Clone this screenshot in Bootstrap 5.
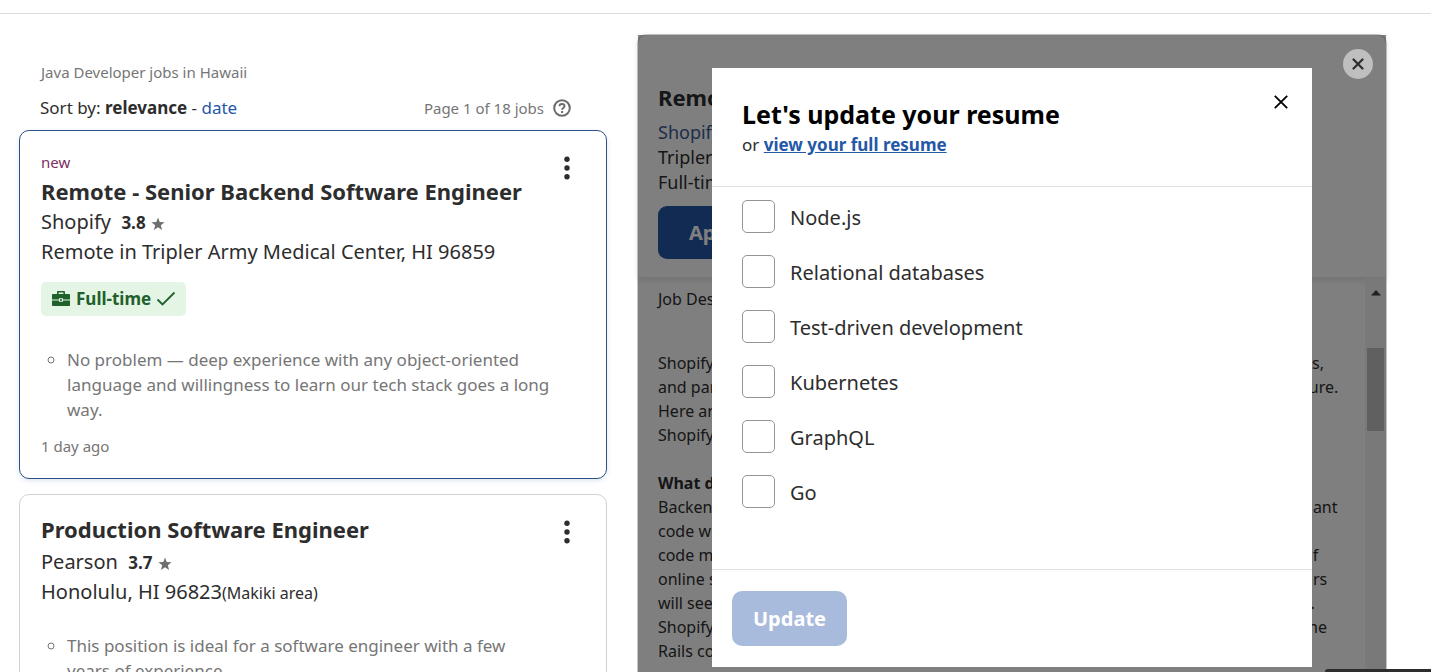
<!DOCTYPE html>
<html lang="en">
<head>
<meta charset="utf-8">
<meta name="viewport" content="width=device-width, initial-scale=1">
<title>Java Developer jobs in Hawaii</title>
<link href="https://cdn.jsdelivr.net/npm/bootstrap@5.3.0/dist/css/bootstrap.min.css" rel="stylesheet">
<style>
  body { font-family: "Noto Sans", sans-serif; color: #2d2d2d; background: #fff; height: 100vh; overflow: hidden; }
  a { color: #2557a7; }
  .topline { height: 14px; border-bottom: 1px solid #dedede; }
  .page { padding: 20px 44px 0 19px; gap: 30px; }
  .results { flex: 588 1 0; min-width: 0; padding-top: 26px; }
  .viewer { flex: 750 1 0; min-width: 0; }
  .muted { color: #767676; }
  .crumb { font-size: 15px; line-height: 24px; padding-left: 22px; }
  .sortbar { font-size: 17px; line-height: 26px; padding: 11px 35px 0 21px; margin-bottom: 9px; }
  .count { font-size: 15px; gap: 8px; }

  /* result cards */
  .job { border: 1px solid #d4d2d0; border-radius: 10px; padding: 20px 20px 20px 21px; margin-bottom: 15px; }
  .job.active { border-color: #2d5088; padding-bottom: 22px; box-shadow: 0 2px 5px rgba(37,87,167,.14); }
  .fresh { font-size: 15px; line-height: 22px; margin-bottom: 4px; color: #7b2f62; }
  .job h2 { font-size: 22px; line-height: 29px; font-weight: 700; margin: 0; }
  .job.active h2 { margin-bottom: 1px; }
  .place { font-size: 20px; line-height: 30px; }
  .place strong { font-size: 17px; line-height: 1; }
  .place .area { font-size: 16px; line-height: 1; }
  .kebab { width: 38px; height: 32px; border: 0; background: none; padding: 0; flex: none; }
  .tag { background: #e4f5e6; color: #1f602b; font-size: 17px; line-height: 34px; font-weight: 700; border-radius: 5px; padding: 0 10px; gap: 5px; margin-top: 15px; }
  .points { list-style: circle; padding: 0 40px 0 26px; margin: 26px 0 14px; font-size: 17px; line-height: 25px; color: #767676; }
  .job.active .points { padding-right: 0; margin-top: 31px; }
  .age { font-size: 15px; line-height: 20px; }

  /* job panel */
  .panel { border: 1px solid #c4c4c4; border-radius: 10px; height: 660px; }
  .head { padding: 47px 20px 18px; height: 243px; border-bottom: 1px solid #ececec; box-shadow: 0 2px 6px rgba(0,0,0,.12); }
  .head h2 { font-size: 22px; line-height: 30px; font-weight: 700; margin: 0 0 8px; }
  .facts { font-size: 18px; line-height: 25px; }
  .facts a { color: #3b5b94; }
  .apply { margin-top: 11px; height: 53px; padding: 0 31px; background: #2557a7; color: #fff; font-weight: 700; font-size: 20px; border: 0; border-radius: 9px; }
  .desc { padding: 9px 10px 0 20px; font-size: 16px; line-height: 24px; }
  .desc .tail { width: 52px; flex: none; }
  .gap-line { height: 40px; }
  .rail { width: 21px; background: #f2f2f2; padding-top: 12px; }
  .thumb { width: 17px; height: 83px; background: #c1c1c1; margin-top: 52px; }
  .shade { inset: 0; background: rgba(0,0,0,.5); }
  .round { top: 14px; right: 13px; width: 30px; height: 30px; border: 0; border-radius: 50%; background: #bfbfbf; padding: 0; }

  /* resume dialog */
  .sheet { width: 600px; max-width: 100%; background: #fff; margin: 33px auto 0; }
  .sheet-head { padding: 29px 20px 28px 30px; border-bottom: 1px solid #e4e2e0; }
  .sheet-head h1 { font-size: 25px; line-height: 34px; font-weight: 700; color: #000; margin: 0 0 1px; }
  .sheet-head p { font-size: 17px; line-height: 26px; margin: 0; }
  .closer { width: 22px; height: 24px; border: 0; background: none; padding: 0; margin-top: -7px; }
  .skills { padding: 13px 30px 39px; }
  .skill { gap: 15px; margin-bottom: 22px; height: 33px; padding: 0; font-size: 20px; line-height: 35px; }
  .skill .form-check-input { width: 33px; height: 33px; margin: 0; float: none; border: 1px solid #949494; border-radius: 5px; }
  .sheet-foot { padding: 21px 20px; border-top: 1px solid #e4e2e0; }
  .update { height: 55px; padding: 0 21px; border: 0; border-radius: 10px; background: #a8bbdc; color: #fff; font-size: 20px; font-weight: 700; }
  .dock { right: 0; bottom: 0; width: 106px; height: 3px; background: #2d2d2d; border-top-left-radius: 8px; }
</style>
</head>
<body>
<div class="topline"></div>
<main class="page d-flex align-items-start">
  <section class="results">
    <div class="crumb muted">Java Developer jobs in Hawaii</div>
    <div class="sortbar d-flex justify-content-between">
      <div>Sort by: <strong>relevance</strong> - <a href="#" class="text-decoration-none">date</a></div>
      <div class="count muted d-flex align-items-center">Page 1 of 18 jobs
        <svg width="20" height="20" viewBox="0 0 20 20" fill="none" stroke="#6b6b6b" stroke-width="2"><circle cx="10" cy="10" r="7.800"/><path d="M7.500 8.300C7.500 6.800 8.500 5.900 10 5.900s2.500 1 2.500 2.200c0 1.700-2.400 2-2.400 3.600"/><path d="M10.100 13v2" /></svg>
      </div>
    </div>

    <article class="job active">
      <div class="d-flex justify-content-between align-items-start">
        <div>
          <div class="fresh">new</div>
          <h2>Remote - Senior Backend Software Engineer</h2>
        </div>
        <button class="kebab" aria-label="Job actions"><svg width="8" height="24" viewBox="0 0 8 24" fill="#2d2d2d"><circle cx="4" cy="3.300" r="2.700"/><circle cx="4" cy="12" r="2.700"/><circle cx="4" cy="20.700" r="2.700"/></svg></button>
      </div>
      <div class="place">Shopify&nbsp; <strong>3.8</strong> <svg width="14" height="14" viewBox="0 0 14 14" fill="#6f6f6f"><path d="M7 .5l1.700 4.600 4.900.2-3.800 3 1.300 4.800L7 10.300l-4.100 2.800 1.300-4.800-3.800-3 4.900-.2z"/></svg></div>
      <div class="place">Remote in Tripler Army Medical Center, HI 96859</div>
      <div class="tag d-inline-flex align-items-center">
        <svg width="20" height="18" viewBox="0 0 20 18" fill="#1f602b"><path fill-rule="evenodd" d="M6 4V2.200C6 1.500 6.500 1 7.200 1h5.600c.7 0 1.200.5 1.200 1.200V4h4c.6 0 1 .4 1 1v4.400h-7V8.200H8v1.200H1V5c0-.6.400-1 1-1zm1.600 0h4.800V2.500H7.600z"/><path d="M1 10.600h7v1.200h4v-1.200h7v4.600c0 .5-.4.800-.8.800H1.800c-.4 0-.8-.3-.8-.8z"/><path d="M9.200 9h1.600v2H9.200z"/></svg>
        Full-time
        <svg width="20" height="16" viewBox="0 0 20 16" fill="none" stroke="#1f602b" stroke-width="1.800"><path d="M1.500 8.500l5 5L18.500 1.500"/></svg>
      </div>
      <ul class="points"><li>No problem — deep experience with any object-oriented language and willingness to learn our tech stack goes a long way.</li></ul>
      <div class="age muted">1 day ago</div>
    </article>

    <article class="job">
      <div class="d-flex justify-content-between align-items-start">
        <div>
          <h2>Production Software Engineer</h2>
        </div>
        <button class="kebab mb-n1" aria-label="Job actions"><svg width="8" height="24" viewBox="0 0 8 24" fill="#2d2d2d"><circle cx="4" cy="3.300" r="2.700"/><circle cx="4" cy="12" r="2.700"/><circle cx="4" cy="20.700" r="2.700"/></svg></button>
      </div>
      <div class="place">Pearson&nbsp; <strong>3.7</strong> <svg width="14" height="14" viewBox="0 0 14 14" fill="#6f6f6f"><path d="M7 .5l1.700 4.600 4.900.2-3.800 3 1.300 4.800L7 10.300l-4.100 2.800 1.300-4.800-3.800-3 4.900-.2z"/></svg></div>
      <div class="place">Honolulu, HI 96823<span class="area">(Makiki area)</span></div>
      <ul class="points"><li>This position is ideal for a software engineer with a few years of experience.</li></ul>
    </article>
  </section>

  <section class="viewer">
    <div class="panel position-relative d-flex flex-column">
      <div class="head">
        <h2>Remote</h2>
        <div class="facts"><a href="#" class="text-decoration-none">Shopify</a></div>
        <div class="facts">Tripler</div>
        <div class="facts">Full-time</div>
        <button class="apply">Apply</button>
      </div>
      <div class="d-flex flex-grow-1">
        <div class="desc flex-grow-1">
          <div>Job Desc</div>
          <div class="gap-line"></div>
          <div class="d-flex justify-content-between"><span>Shopify</span><span class="tail">es,</span></div>
          <div class="d-flex justify-content-between"><span>and part</span><span class="tail">ture.</span></div>
          <div>Here are</div>
          <div>Shopify</div>
          <br>
          <div><strong>What do</strong></div>
          <div class="d-flex justify-content-between"><span>Backend</span><span class="tail">nant</span></div>
          <div>code wi</div>
          <div class="d-flex justify-content-between"><span>code mo</span><span class="tail">of</span></div>
          <div class="d-flex justify-content-between"><span>online s</span><span class="tail">urs</span></div>
          <div class="d-flex justify-content-between"><span>will see</span><span class="tail">y.</span></div>
          <div class="d-flex justify-content-between"><span>Shopify</span><span class="tail">me</span></div>
          <div>Rails co</div>
        </div>
        <div class="rail d-flex flex-column align-items-center">
          <svg width="10" height="6" viewBox="0 0 10 6"><path d="M0 5.500L5 0l5 5.500z" fill="#404040"/></svg>
          <div class="thumb"></div>
        </div>
      </div>

      <div class="shade position-absolute">
        <div class="sheet" role="dialog" aria-labelledby="dlg-title">
          <div class="sheet-head d-flex justify-content-between align-items-start">
            <div>
              <h1 id="dlg-title">Let's update your resume</h1>
              <p>or <a href="#" class="fw-bold">view your full resume</a></p>
            </div>
            <button class="closer d-flex align-items-center justify-content-center" aria-label="Close dialog"><svg width="14" height="14" viewBox="0 0 14 14" stroke="#000" stroke-width="1.800"><path d="M.8.8l12.400 12.400M13.200.8L.8 13.200"/></svg></button>
          </div>
          <div class="skills">
            <div class="skill form-check d-flex"><input class="form-check-input" type="checkbox" id="s1"><label for="s1">Node.js</label></div>
            <div class="skill form-check d-flex"><input class="form-check-input" type="checkbox" id="s2"><label for="s2">Relational databases</label></div>
            <div class="skill form-check d-flex"><input class="form-check-input" type="checkbox" id="s3"><label for="s3">Test-driven development</label></div>
            <div class="skill form-check d-flex"><input class="form-check-input" type="checkbox" id="s4"><label for="s4">Kubernetes</label></div>
            <div class="skill form-check d-flex"><input class="form-check-input" type="checkbox" id="s5"><label for="s5">GraphQL</label></div>
            <div class="skill form-check d-flex"><input class="form-check-input" type="checkbox" id="s6"><label for="s6">Go</label></div>
          </div>
          <div class="sheet-foot"><button class="update">Update</button></div>
        </div>
        <button class="round position-absolute d-flex align-items-center justify-content-center" aria-label="Close job"><svg width="12" height="12" viewBox="0 0 12 12" stroke="#2d2d2d" stroke-width="2.200" stroke-linecap="round"><path d="M1.500 1.500l9 9M10.500 1.500l-9 9"/></svg></button>
      </div>
    </div>
  </section>
</main>
<div class="dock position-fixed"></div>
<script src="https://cdn.jsdelivr.net/npm/bootstrap@5.3.0/dist/js/bootstrap.bundle.min.js"></script>
</body>
</html>
